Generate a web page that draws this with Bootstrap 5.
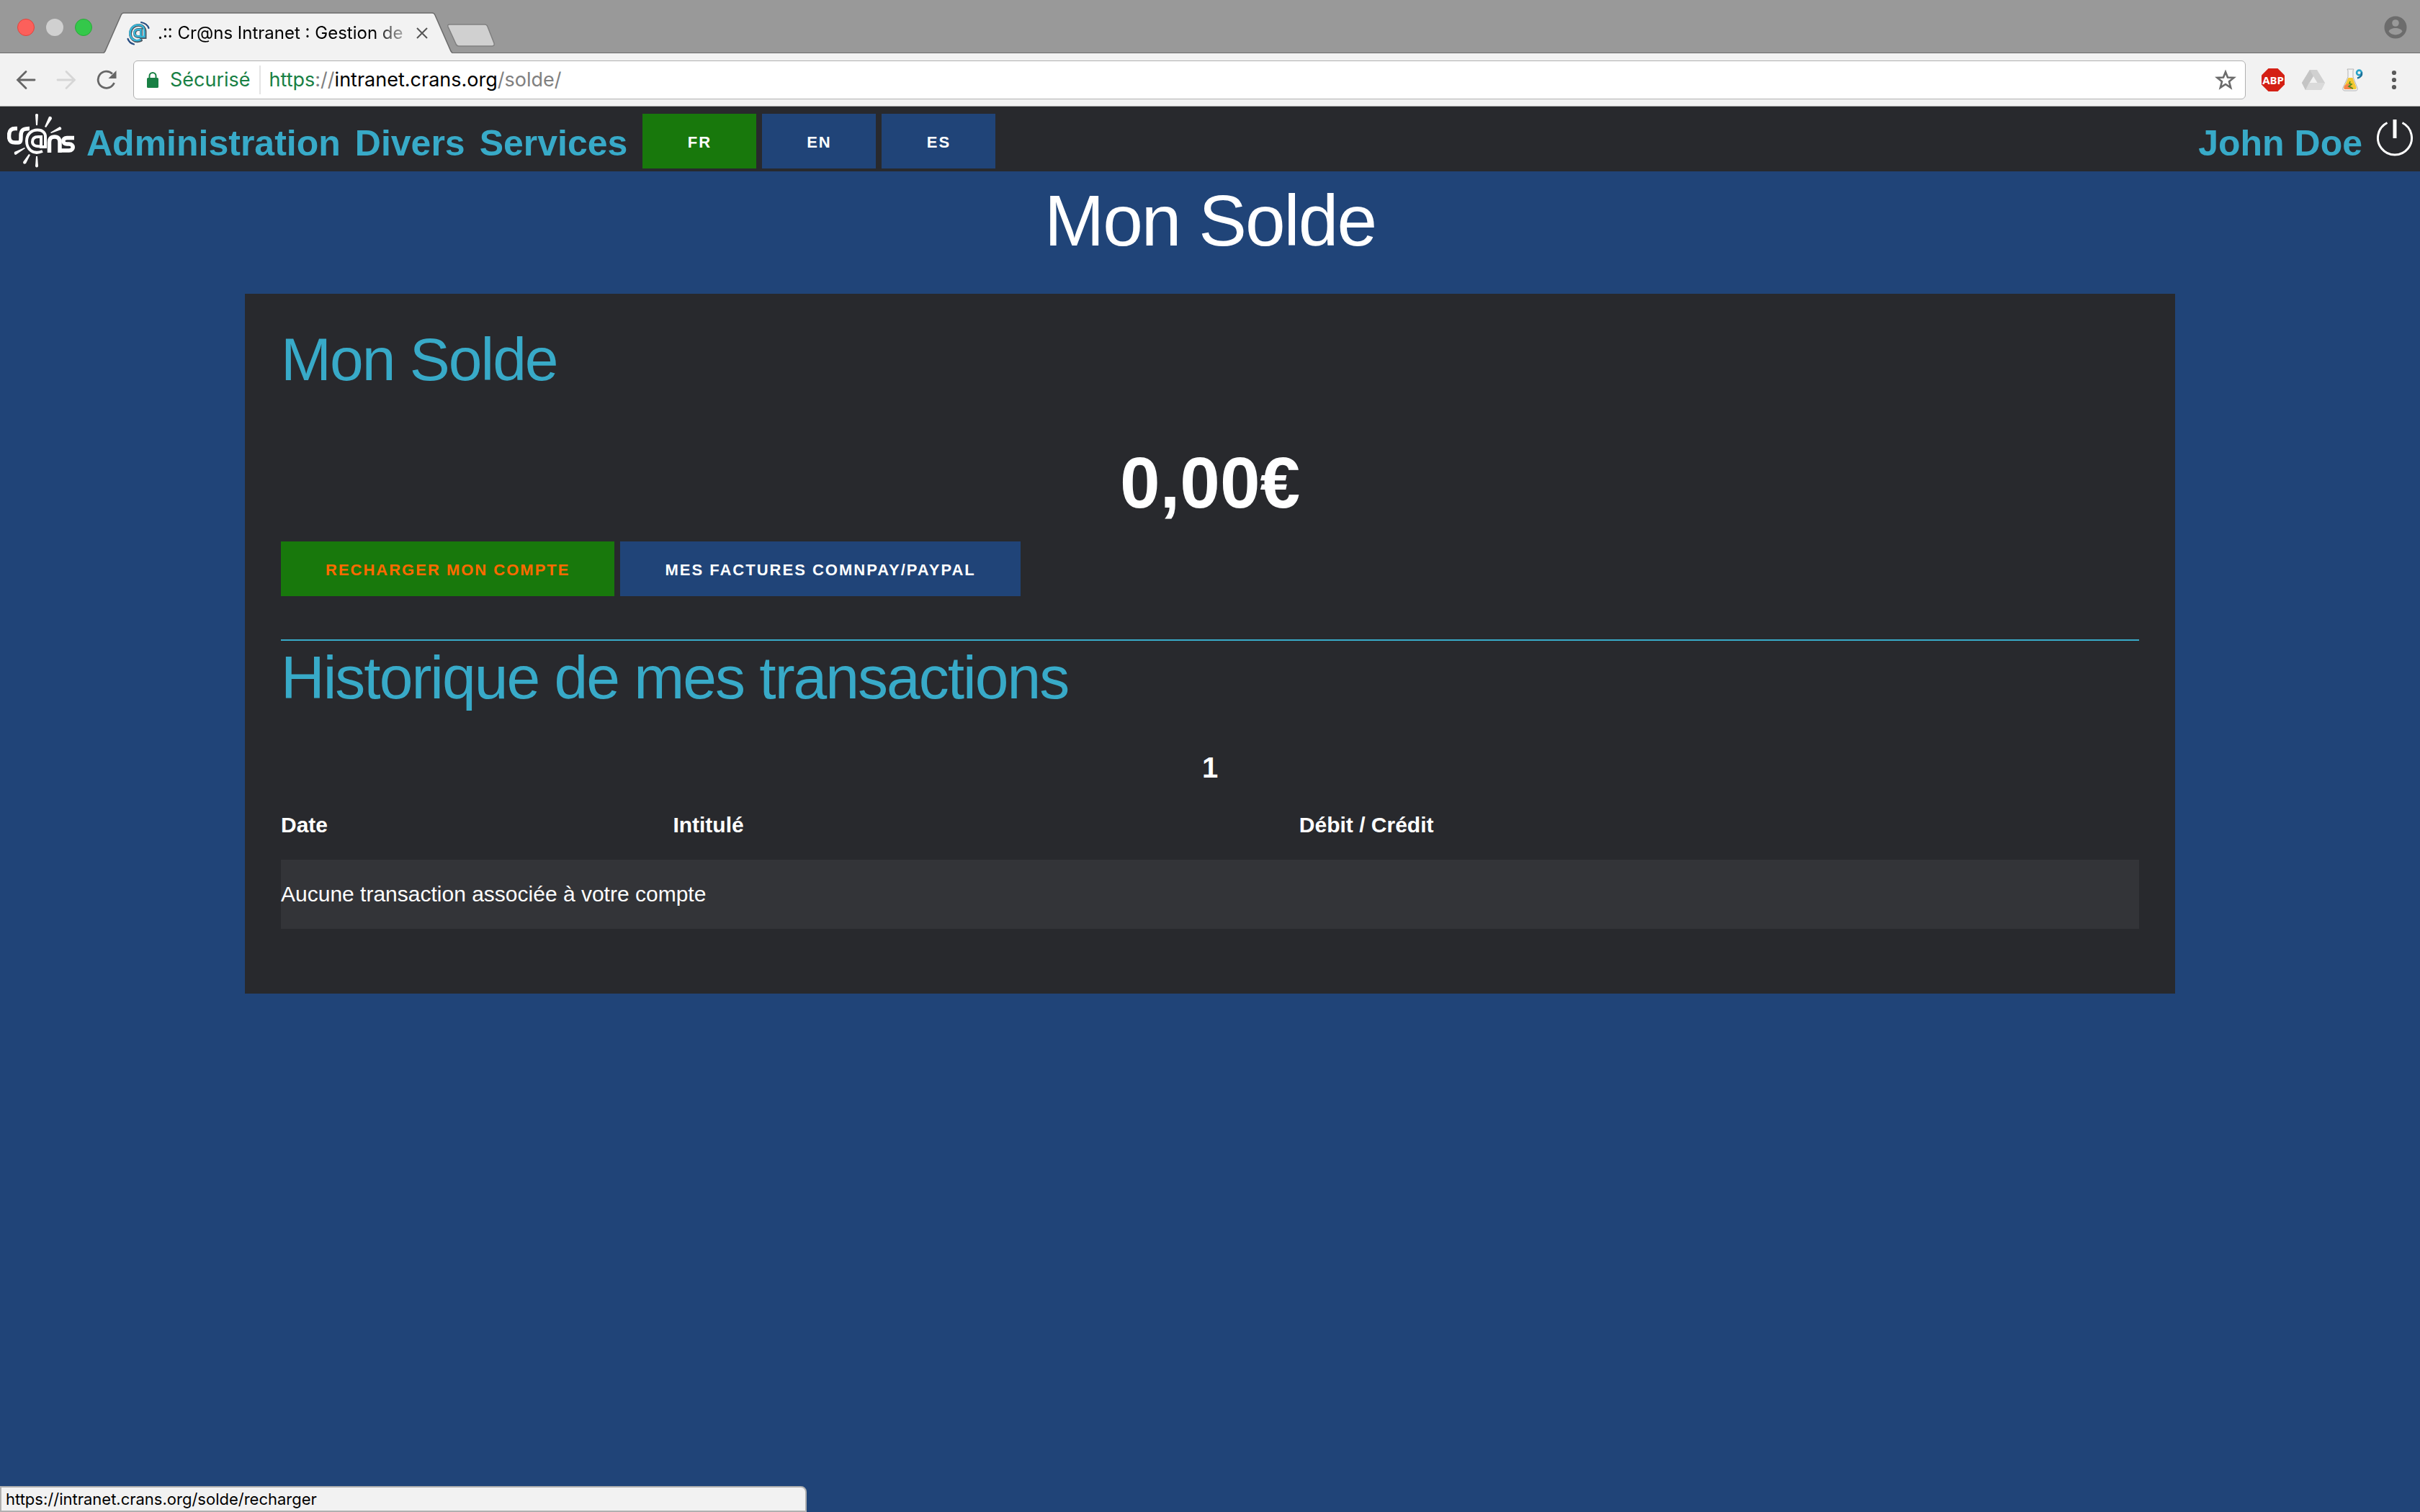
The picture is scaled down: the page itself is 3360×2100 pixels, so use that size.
<!DOCTYPE html>
<html lang="fr">
<head>
<meta charset="utf-8">
<meta name="viewport" content="width=device-width, initial-scale=1">
<title>.:: Cr@ns Intranet : Gestion de compte</title>
<link href="https://cdn.jsdelivr.net/npm/bootstrap@5.3.0/dist/css/bootstrap.min.css" rel="stylesheet">
<style>
  :root { --crans-blue: #204478; --crans-dark: #28292d; --crans-cyan: #38aac8; --crans-green: #18780c; }
  body { background: var(--crans-blue); color: #fff; font: 30px/48px "Liberation Sans", Arial, sans-serif; }
  svg { display: block; flex: none; }

  /* browser window */
  .ui-font { font-family: Inter, Roboto, sans-serif; }
  .tabstrip { height: 74px; background: #999; border-bottom: 1px solid #6b6b6b; }
  .lights { width: 144px; padding-left: 24px; gap: 16px; height: 76px; }
  .light { width: 24px; height: 24px; border-radius: 50%; }
  .light-close { background: #fc605b; border: 1px solid #e0443e; }
  .light-min { background: #d0d0d0; }
  .light-max { background: #34c84a; border: 1px solid #2aa83a; }
  .browser-tab { width: 484px; height: 57px; margin-bottom: -1px; }
  .tab-shape { position: absolute; inset: 0; }
  .tab-body { position: relative; height: 57px; padding: 0 34px 0 32px; }
  .tab-title { font-size: 24px; line-height: 30px; color: #000; margin-left: 11px;
    -webkit-mask-image: linear-gradient(90deg, #000 88%, rgba(0,0,0,.3)); mask-image: linear-gradient(90deg, #000 88%, rgba(0,0,0,.3)); }
  .plain { border: 0; background: none; padding: 0; }
  .new-tab { margin: 16px 0 0 -8px; }
  .profile { margin: 22px 18px 0 0; }
  .toolbar { height: 74px; background: #f2f2f2; border-bottom: 1px solid #aaa; padding: 0 22px; }
  .navset { gap: 24px; width: 163px; }
  .address { height: 54px; background: #fff; border: 1px solid #b0b0b0; border-radius: 6px; padding: 0 12px 0 17px; font-size: 27px; line-height: 36px; }
  .secure { color: #188044; }
  .secure-label { margin-left: 15px; }
  .address .divider { width: 2px; height: 40px; background: #e4e4e4; margin: 0 12px; }
  .grey { color: #808080; }
  .extensions { gap: 24px; margin-left: 22px; }

  /* site header */
  .site-nav { height: 90px; background: var(--crans-dark); padding: 0 6px 0 10px; }
  .site-nav .menu { gap: 20px; font-size: 50px; line-height: 60px; font-weight: 700; padding-top: 12px; }
  .site-nav .menu a { color: var(--crans-cyan); text-decoration: none; }
  .brand { margin-right: 16px; padding-top: 6px; }
  .langs { margin-left: 21px; gap: 8px; padding-top: 6px; }
  .power { margin-left: 16px; padding-bottom: 4px; }

  .btn-crans { --bs-btn-padding-x: 62px; --bs-btn-padding-y: 0; --bs-btn-font-size: 22px; --bs-btn-font-weight: 700; --bs-btn-line-height: 72px;
    --bs-btn-border-width: 0; --bs-btn-border-radius: 0; --bs-btn-color: #fff; --bs-btn-bg: var(--crans-blue); --bs-btn-hover-color: #ff6a00;
    --bs-btn-hover-bg: var(--crans-blue); padding-top: 4px; text-transform: uppercase; letter-spacing: 2px; }
  .btn-crans.on { --bs-btn-bg: var(--crans-green); --bs-btn-hover-bg: var(--crans-green); }
  .btn-crans.hot { --bs-btn-color: #ff6a00; }
  .langs .btn-crans { width: 158px; padding-left: 0; padding-right: 0; }

  /* page */
  h1, h2 { font-weight: 400; letter-spacing: -2px; margin: 0; }
  h1 { font-size: 100px; line-height: 120px; padding: 8px 0 42px; }
  h2 { font-size: 84px; line-height: 102px; color: var(--crans-cyan); }
  .panel { background: var(--crans-dark); margin: 0 340px; padding: 40px 50px 90px; }
  .balance { font-size: 100px; line-height: 120px; font-weight: 700; margin: 60px 0 22px; }
  .rule { border: 0; border-top: 2px solid var(--crans-cyan); opacity: 1; margin: 60px 0 0; }
  .pages { font-size: 40px; line-height: 56px; font-weight: 700; padding: 46px 0 4px; }
  .history { table-layout: fixed; width: 100%; }
  .history th, .history td { padding: 24px 0; }
  .history tbody tr { background: #333438; }
  .col-date { width: 21.1%; } .col-label { width: 33.7%; }

  .status { position: fixed; left: 0; bottom: 0; width: 1120px; height: 36px; background: #f2f2f2; color: #000; border: 2px solid #b0b0b0;
    border-radius: 0 8px 0 0; font-size: 22px; line-height: 32px; padding-left: 6px; }
</style>
</head>
<body>
<div class="ui-font">
  <div class="tabstrip d-flex">
    <div class="lights d-flex align-items-center">
      <span class="light light-close"></span><span class="light light-min"></span><span class="light light-max"></span>
    </div>
    <div class="browser-tab position-relative align-self-end">
      <svg class="tab-shape" width="484" height="57" viewBox="0 0 484 57"><path d="M0 57L2 54L24 4Q25 1 28 1H456Q459 1 460 4L482 54L484 57Z" fill="#f2f2f2"/><path d="M0 56.500L2 54L24 4Q25 1 28 1H456Q459 1 460 4L482 54L484 56.500" fill="none" stroke="#6b6b6b" stroke-width="1.500"/></svg>
      <div class="tab-body d-flex align-items-center">
        <svg width="32" height="34" viewBox="0 0 32 34" fill="none" stroke-linecap="round"><path d="M20 2C25 3 29 6 30.500 10M1.500 25C3 29 6 31.500 10 32.500" stroke="#254b80" stroke-width="2.200"/><path d="M20 27C11 31 4.500 24 5 17C5.500 9.500 11 6 16.500 6C22 6 25.500 10 25.500 15V23H20V12H16C12 12 11 14.500 11 17.500S13 22.500 19 22" stroke="#4a5660" stroke-width="4"/><path d="M19 26C10 30 4 23 4.500 16.500C5 9 10.500 5.500 16 5.500C21.500 5.500 24.500 9.500 24.500 14.500V22H19.500V12H15.500C11.500 12 10.500 14.500 10.500 17S12.500 22 18 21.500" stroke="#38b6d8" stroke-width="2.600"/></svg>
        <span class="tab-title text-nowrap">.:: Cr@ns Intranet : Gestion de</span>
        <button class="plain ms-auto" aria-label="Fermer l'onglet"><svg width="16" height="16" viewBox="0 0 16 16"><path d="M1 1L15 15M15 1L1 15" stroke="#555" stroke-width="2"/></svg></button>
      </div>
    </div>
    <button class="plain new-tab align-self-start" aria-label="Nouvel onglet"><svg width="68" height="50" viewBox="0 0 68 50"><path d="M4 18H53Q56 18 57 21L66 44Q67 48 63 48H17Q14 48 13 45L2 21Q1 18 4 18Z" fill="#d0d0d0" stroke="#808080" stroke-width="1.500"/></svg></button>
    <button class="plain profile ms-auto align-self-start" aria-label="Profil"><svg width="32" height="32" viewBox="0 0 32 32"><circle cx="16" cy="16" r="15.500" fill="#6c6c6c"/><circle cx="16" cy="10" r="4.800" fill="#999"/><path d="M6.500 21.500C9 15.500 23 15.500 25.500 21.500C21 28 11 28 6.500 21.500Z" fill="#999"/></svg></button>
  </div>
  <div class="toolbar d-flex align-items-center">
    <div class="navset d-flex align-items-center">
      <button class="plain" aria-label="Précédent"><svg width="28" height="28" viewBox="0 0 28 28" fill="none" stroke="#666" stroke-width="2.800" stroke-linecap="round"><path d="M26 14H3M14 2.500L2.500 14L14 25.500"/></svg></button>
      <button class="plain ms-1" aria-label="Suivant"><svg width="28" height="28" viewBox="0 0 28 28" fill="none" stroke="#d6d6d6" stroke-width="2.800" stroke-linecap="round"><path d="M2 14H25M14 2.500L25.500 14L14 25.500"/></svg></button>
      <button class="plain ms-1" aria-label="Actualiser"><svg width="28" height="28" viewBox="0 0 28 28"><path d="M24.500 18A11.600 11.600 0 1 1 22 5.500" fill="none" stroke="#666" stroke-width="2.800"/><path d="M27.500 1V12H16.500Z" fill="#666"/></svg></button>
    </div>
    <div class="address d-flex align-items-center flex-grow-1">
      <svg width="18" height="22" viewBox="0 0 18 22"><rect x="1" y="8" width="16" height="14" rx="1.500" fill="#188044"/><path d="M4.500 9V5.500a4.500 4.500 0 0 1 9 0V9" fill="none" stroke="#188044" stroke-width="2"/></svg>
      <span class="secure secure-label">Sécurisé</span><span class="divider"></span>
      <span class="text-black"><span class="secure">https</span><span class="grey">://</span>intranet.crans.org<span class="grey">/solde/</span></span>
      <button class="plain ms-auto" aria-label="Ajouter aux favoris"><svg width="30" height="30" viewBox="0 0 30 30"><path d="M15 4L18 11.600L26.500 12L20 17.300L22.200 25.700L15 21L7.800 25.700L10 17.300L3.500 12L12 11.600Z" fill="none" stroke="#6a6a6a" stroke-width="2.600"/></svg></button>
    </div>
    <div class="extensions d-flex align-items-center">
      <svg width="32" height="32" viewBox="0 0 32 32"><path d="M9.500 0H22.500L32 9.500V22.500L22.500 32H9.500L0 22.500V9.500Z" fill="#d42015"/><text x="16" y="22" text-anchor="middle" font-family="Noto Sans, Open Sans" font-size="15" font-weight="700" fill="#fff">ABP</text></svg>
      <svg width="32" height="32" viewBox="0 0 32 32"><path d="M11 2H21L32 20L27 30H5L0 20Z" fill="#d0d0d0"/><path d="M11 2L16 11L5 30L0 20Z" fill="#c4c4c4"/><path d="M10 20H32L27 30H5Z" fill="#dadada"/><path d="M16 11L21.500 20H10.500Z" fill="#f2f2f2"/></svg>
      <svg width="30" height="32" viewBox="0 0 30 32"><path d="M7 1H16L15 3V12L21 27Q22 31 18 31H4Q0 31 1 27L8 12V3Z" fill="#f4f4f4" stroke="#b4b4b4" stroke-width="1"/><path d="M8.500 13H14.500L19.500 26Q20 29 18 29H4Q2 29 2.500 26Z" fill="#f4c832"/><path d="M3 24L8 21L13 25V29H4Q2 29 2.500 26Z" fill="#f6854a"/><path d="M11 18L10 21L13 22L9 25L15 28" fill="none" stroke="#4b8a20" stroke-width="1.600"/><circle cx="23.500" cy="6" r="3.400" fill="none" stroke="#2aa3c8" stroke-width="2.600"/><path d="M27 5.500Q28 12 21 13.500" fill="none" stroke="#1a6f98" stroke-width="2.400"/></svg>
      <button class="plain ms-1" aria-label="Menu"><svg width="28" height="28" viewBox="0 0 28 28" fill="#5a5a5a"><circle cx="14" cy="4" r="3.100"/><circle cx="14" cy="14" r="3.100"/><circle cx="14" cy="24" r="3.100"/></svg></button>
    </div>
  </div>
</div>

<nav class="site-nav d-flex align-items-center">
  <a class="brand" href="#" aria-label="Cr@ns">
    <svg width="94" height="76" viewBox="0 0 94 76" fill="none" stroke="#fff" stroke-width="5.500">
      <path d="M14 20.500H11C4 20.500 2.500 25 2.500 31S5 40 11 40H15C19 40 19 37 19 32V30C19 23 22 20.500 31 20.500"/>
      <path d="M49 52C35 58 27 48 27 38C27 28 34 22.500 42 22.500C50 22.500 53 27 53 32V46H47V32H43C37 32 35 35 35 39S38 46 47 45" stroke-width="4"/>
      <path d="M58.500 54V40C58.500 34 61 32 66 32C71 32 73 35 73 39V54"/><path d="M93 33.500H83C76 33.500 76 42 83 42H86C93 42 93 51 86 51H74"/>
      <g fill="#fff" stroke="none"><path d="M39 1Q41 -1 43 1L42 16H40Z"/><path d="M58 4Q62 3 62 7L54 19L52 18Z"/><path d="M73 18Q76 19 75 22L61 27L60 26Z"/><path d="M25 48L24 47L10 53Q9 57 12 57Z"/><path d="M30 56L32 57L26 69Q22 71 22 67Z"/><path d="M40 59H42L43 73Q41 76 39 73Z"/></g>
    </svg>
  </a>
  <div class="menu d-flex"><a href="#">Administration</a><a href="#">Divers</a><a href="#">Services</a></div>
  <div class="langs d-flex"><button class="btn btn-crans on">fr</button><button class="btn btn-crans">en</button><button class="btn btn-crans">es</button></div>
  <div class="menu d-flex ms-auto"><a href="#">John Doe</a></div>
  <a class="power" href="#" aria-label="Déconnexion"><svg width="58" height="58" viewBox="0 0 58 58" fill="none" stroke="#fff"><path d="M18.500 8.500A23.500 23.500 0 1 0 39.500 8.500" stroke-width="3"/><path d="M29 4V30" stroke-width="5"/></svg></a>
</nav>

<main>
  <h1 class="text-center">Mon Solde</h1>
  <section class="panel">
    <h2>Mon Solde</h2>
    <div class="balance text-center">0,00€</div>
    <div class="d-flex gap-2"><a class="btn btn-crans on hot" href="#">Recharger mon compte</a><a class="btn btn-crans" href="#">Mes factures Comnpay/Paypal</a></div>
    <hr class="rule">
    <h2>Historique de mes transactions</h2>
    <div class="pages text-center">1</div>
    <table class="history">
      <thead><tr><th class="col-date">Date</th><th class="col-label">Intitulé</th><th>Débit / Crédit</th></tr></thead>
      <tbody><tr><td colspan="3">Aucune transaction associée à votre compte</td></tr></tbody>
    </table>
  </section>
</main>
<div class="status ui-font">https://intranet.crans.org/solde/recharger</div>
<script src="https://cdn.jsdelivr.net/npm/bootstrap@5.3.0/dist/js/bootstrap.bundle.min.js"></script>
</body>
</html>
